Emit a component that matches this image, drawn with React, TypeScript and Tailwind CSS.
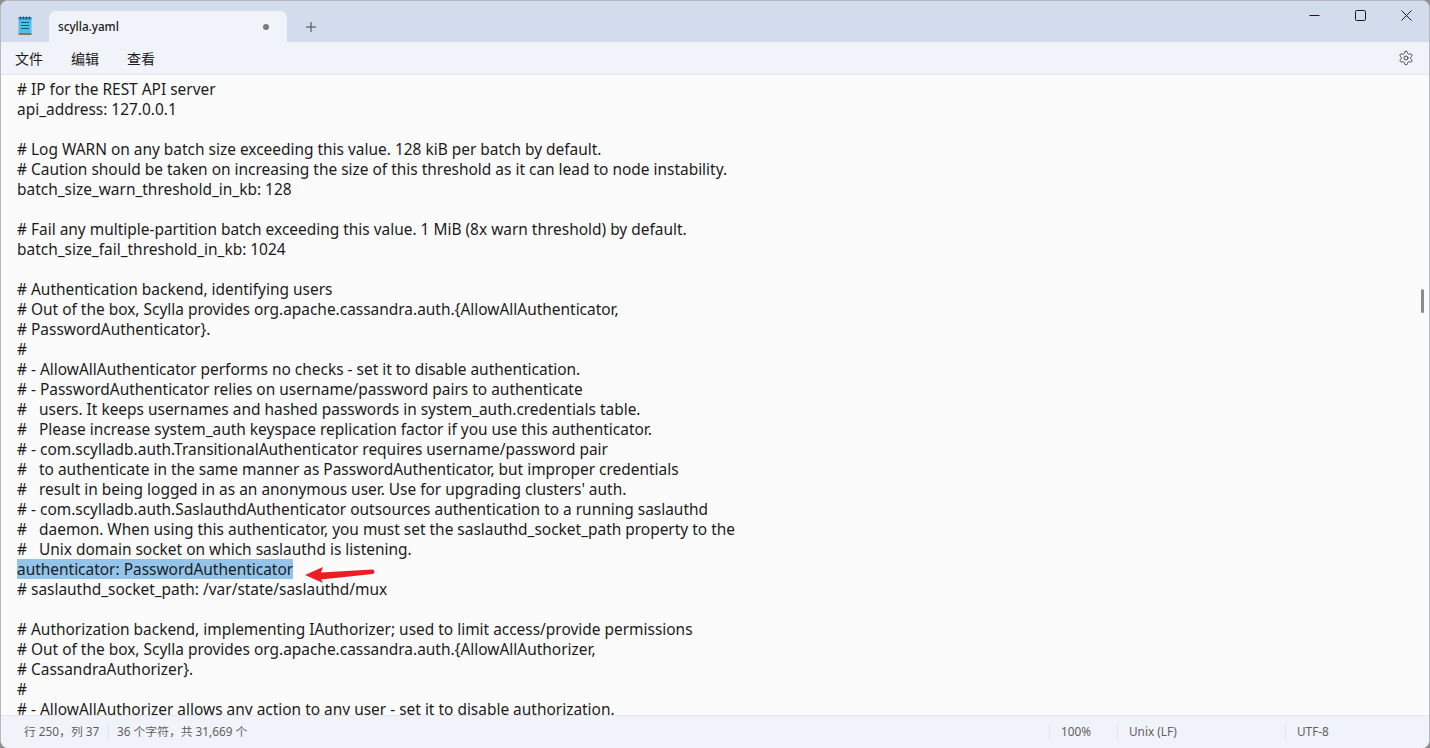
const lines: string[] = [
  "# IP for the REST API server",
  "api_address: 127.0.0.1",
  "",
  "# Log WARN on any batch size exceeding this value. 128 kiB per batch by default.",
  "# Caution should be taken on increasing the size of this threshold as it can lead to node instability.",
  "batch_size_warn_threshold_in_kb: 128",
  "",
  "# Fail any multiple-partition batch exceeding this value. 1 MiB (8x warn threshold) by default.",
  "batch_size_fail_threshold_in_kb: 1024",
  "",
  "# Authentication backend, identifying users",
  "# Out of the box, Scylla provides org.apache.cassandra.auth.{AllowAllAuthenticator,",
  "# PasswordAuthenticator}.",
  "#",
  "# - AllowAllAuthenticator performs no checks - set it to disable authentication.",
  "# - PasswordAuthenticator relies on username/password pairs to authenticate",
  "#   users. It keeps usernames and hashed passwords in system_auth.credentials table.",
  "#   Please increase system_auth keyspace replication factor if you use this authenticator.",
  "# - com.scylladb.auth.TransitionalAuthenticator requires username/password pair",
  "#   to authenticate in the same manner as PasswordAuthenticator, but improper credentials",
  "#   result in being logged in as an anonymous user. Use for upgrading clusters' auth.",
  "# - com.scylladb.auth.SaslauthdAuthenticator outsources authentication to a running saslauthd",
  "#   daemon. When using this authenticator, you must set the saslauthd_socket_path property to the",
  "#   Unix domain socket on which saslauthd is listening.",
  "authenticator: PasswordAuthenticator",
  "# saslauthd_socket_path: /var/state/saslauthd/mux",
  "",
  "# Authorization backend, implementing IAuthorizer; used to limit access/provide permissions",
  "# Out of the box, Scylla provides org.apache.cassandra.auth.{AllowAllAuthorizer,",
  "# CassandraAuthorizer}.",
  "#",
  "# - AllowAllAuthorizer allows any action to any user - set it to disable authorization.",
];

const SELECTED = "authenticator: PasswordAuthenticator";
const uiFont = "font-['Noto_Sans','Noto_Sans_CJK_SC',sans-serif]";

function NotepadIcon() {
  return (
    <svg width="16" height="20" viewBox="0 0 16 20">
      <rect x="0.5" y="2" width="13" height="16.5" rx="1" fill="#4fbfe3" />
      <rect x="0.5" y="1" width="13" height="2.5" fill="#2a8cae" />
      <rect x="0.5" y="17.4" width="13" height="1.4" fill="#8a5a34" />
      <rect x="3" y="6" width="8" height="1" fill="#14597a" />
      <rect x="3" y="9" width="8" height="1" fill="#14597a" />
      <rect x="3" y="12" width="8" height="1" fill="#14597a" />
      <path d="M2.5 0.5v2.5M5.5 0.5v2.5M8.5 0.5v2.5M11.5 0.5v2.5" stroke="#14597a" strokeWidth="1" />
    </svg>
  );
}

function MenuItem({ label }: { label: string }) {
  return <span className="text-[14px] leading-none text-[#1b1b1b]">{label}</span>;
}

function StatusCell({ label, className }: { label: string; className: string }) {
  return (
    <div className={`flex h-[16px] items-center border-l border-[#dfe3ea] pl-[11px] ${className}`}>
      {label}
    </div>
  );
}

export default function App() {
  return (
    <div className={`h-[748px] w-[1430px] overflow-hidden bg-[#8e8e8e] ${uiFont}`}>
      <div className="relative flex h-[748px] w-[1430px] flex-col overflow-hidden rounded-[8px] border-x border-t border-[#b5b8bd] bg-[#fbfbfb]">
        {/* title bar */}
        <div className="flex h-[41px] shrink-0 items-end bg-[#d3dcec]">
          <div className="flex h-[31px] w-[48px] items-start justify-center pt-[5px] pl-[1px]">
            <NotepadIcon />
          </div>
          <div className="flex h-[31px] w-[238px] items-center justify-between rounded-t-[7px] bg-[#f0f3f9] pl-[9px] pr-[18px] pt-[1px]">
            <span className="text-[11.7px] font-medium text-[#1b1b1b]">scylla.yaml</span>
            <span className="h-[6px] w-[6px] rounded-full bg-[#7a7a7a]" />
          </div>
          <div className="flex h-[31px] w-[48px] items-center justify-center">
            <svg width="12" height="12" viewBox="0 0 12 12" stroke="#444" strokeWidth="1">
              <path d="M6 1v10M1 6h10" />
            </svg>
          </div>
          <div className="flex-1" />
          <div className="flex h-[41px] items-start">
            <div className="flex h-[29px] w-[45px] items-center justify-center">
              <svg width="11" height="11" viewBox="0 0 11 11" stroke="#1b1b1b" strokeWidth="1">
                <path d="M0.5 5.5h10" />
              </svg>
            </div>
            <div className="flex h-[29px] w-[46px] items-center justify-center">
              <svg width="11" height="11" viewBox="0 0 11 11" fill="none" stroke="#1b1b1b" strokeWidth="1">
                <rect x="0.5" y="0.5" width="10" height="10" rx="1.2" />
              </svg>
            </div>
            <div className="flex h-[29px] w-[46px] items-center justify-center">
              <svg width="11" height="11" viewBox="0 0 11 11" stroke="#1b1b1b" strokeWidth="1">
                <path d="M0.5 0.5l10 10M10.5 0.5l-10 10" />
              </svg>
            </div>
          </div>
        </div>

        {/* menu bar */}
        <div className="flex h-[33px] shrink-0 items-center justify-between border-b border-[#e4e6ea] bg-[#f0f3f9] pl-[14px] pr-[15px]">
          <div className="flex gap-[28px] pt-[2px]">
            <MenuItem label="文件" />
            <MenuItem label="编辑" />
            <MenuItem label="查看" />
          </div>
          <svg width="16" height="16" viewBox="0 0 24 24" fill="none" stroke="#444" strokeWidth="1.5" strokeLinecap="round" strokeLinejoin="round">
            <path d="M12.22 2h-.44a2 2 0 0 0-2 2v.18a2 2 0 0 1-1 1.73l-.43.25a2 2 0 0 1-2 0l-.15-.08a2 2 0 0 0-2.73.73l-.22.38a2 2 0 0 0 .73 2.73l.15.1a2 2 0 0 1 1 1.72v.51a2 2 0 0 1-1 1.74l-.15.09a2 2 0 0 0-.73 2.73l.22.38a2 2 0 0 0 2.73.73l.15-.08a2 2 0 0 1 2 0l.43.25a2 2 0 0 1 1 1.73V20a2 2 0 0 0 2 2h.44a2 2 0 0 0 2-2v-.18a2 2 0 0 1 1-1.73l.43-.25a2 2 0 0 1 2 0l.15.08a2 2 0 0 0 2.73-.73l.22-.39a2 2 0 0 0-.73-2.73l-.15-.08a2 2 0 0 1-1-1.74v-.5a2 2 0 0 1 1-1.74l.15-.09a2 2 0 0 0 .73-2.73l-.22-.38a2 2 0 0 0-2.73-.73l-.15.08a2 2 0 0 1-2 0l-.43-.25a2 2 0 0 1-1-1.73V4a2 2 0 0 0-2-2z" />
            <circle cx="12" cy="12" r="3" />
          </svg>
        </div>

        {/* editor */}
        <div className="relative min-h-0 flex-1 overflow-hidden pl-[16px] pt-[4px]">
          {lines.map((line, i) => (
            <div key={i} className="h-[20px] whitespace-pre text-[15.45px] leading-[20px] text-[#1b1b1b]">
              {line === SELECTED ? <span className="inline-block bg-[#94c4ea]">{line}</span> : line}
            </div>
          ))}
          <svg className="absolute left-[303px] top-[487px]" width="72" height="22" viewBox="0 0 72 22">
            <path d="M1 13L19 5L17 10.4L68 7.6A2.2 2.2 0 0 1 68.5 12L17 17.4L19 21Z" fill="#ee1c25" />
          </svg>
          <div className="absolute left-[1420px] top-[214px] h-[24px] w-[3px] rounded-full bg-[#8c8c8c]" />
        </div>

        {/* status bar */}
        <div className="flex h-[33px] shrink-0 items-center border-t border-[#e4e6ea] bg-[#f0f3f9] text-[11.8px] text-[#5f5f5f]">
          <div className="w-[107px] pl-[23px]">行 250，列 37</div>
          <div className="flex h-[16px] items-center border-l border-[#dfe3ea] pl-[8px]">36 个字符，共 31,669 个</div>
          <div className="flex-1" />
          <StatusCell label="100%" className="w-[68px]" />
          <StatusCell label="Unix (LF)" className="w-[168px]" />
          <StatusCell label="UTF-8" className="w-[144px]" />
        </div>
      </div>
    </div>
  );
}
